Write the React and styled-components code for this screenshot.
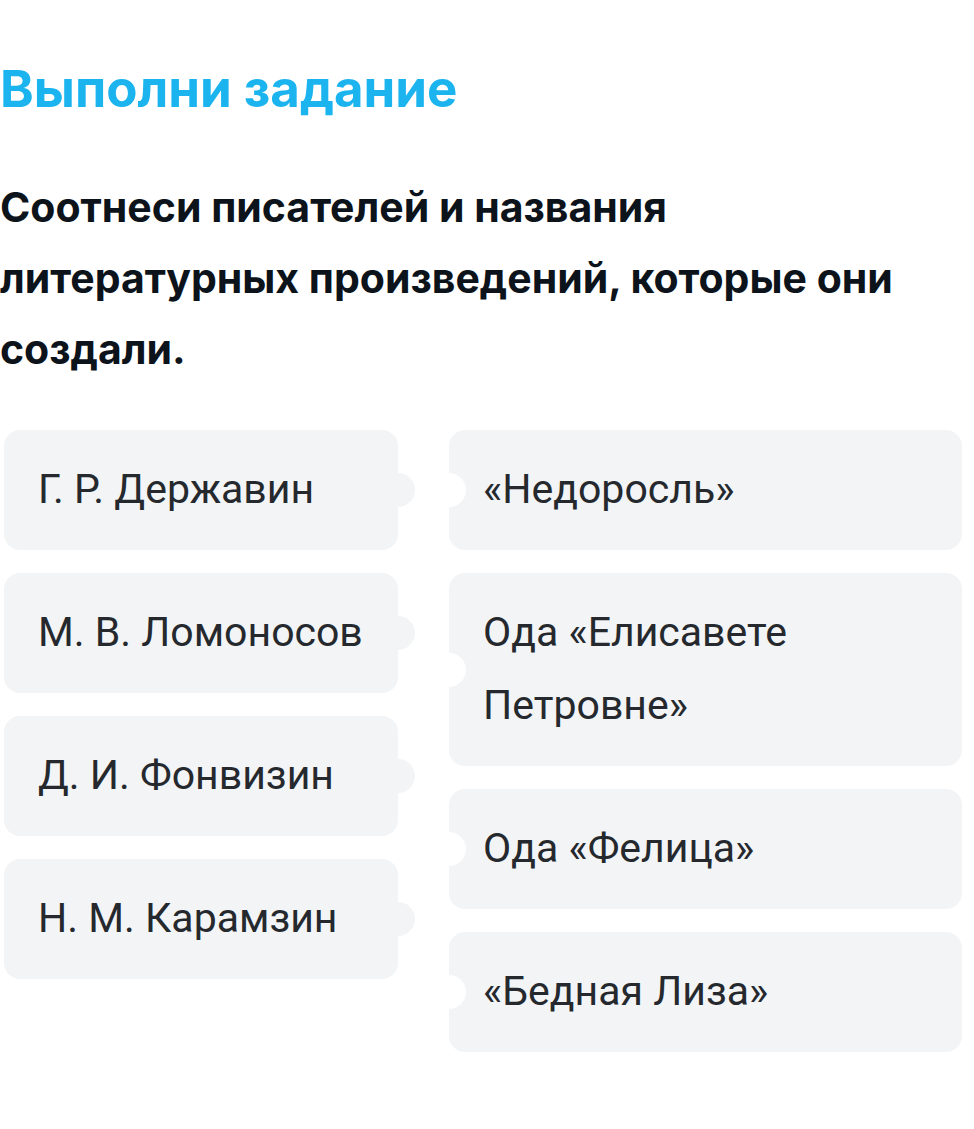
import styled, { createGlobalStyle } from 'styled-components';

const GlobalStyle = createGlobalStyle`
  html, body {
    margin: 0;
    padding: 0;
    background: #ffffff;
  }
`;

const Page = styled.div`
  width: 974px;
  min-height: 1129px;
  overflow: hidden;
  background: #ffffff;
`;

const Heading = styled.h1`
  margin: 58px 0 0 0;
  font-family: Inter, "Noto Sans", sans-serif;
  font-weight: 700;
  font-size: 51px;
  line-height: 61px;
  color: #1bb4ef;
`;

const Question = styled.p`
  margin: 53px 0 0 0;
  width: 930px;
  font-family: Inter, "Noto Sans", sans-serif;
  font-weight: 700;
  font-size: 41px;
  line-height: 71px;
  color: #0c131b;
`;

const Board = styled.div`
  display: flex;
  align-items: flex-start;
  gap: 51px;
  margin: 45px 0 0 4px;
`;

const Column = styled.div`
  display: flex;
  flex-direction: column;
  gap: 23px;
  width: ${(p) => p.$width}px;
`;

const Card = styled.div`
  position: relative;
  padding: 23px 34px 24px;
  background: #f2f4f6;
  border-radius: 16px;
  font-family: Roboto, "Liberation Sans", sans-serif;
  font-size: 41px;
  line-height: 73px;
  color: #25292e;

  &::after {
    content: '';
    position: absolute;
    top: 50%;
    width: 34px;
    height: 34px;
    margin-top: -17px;
    border-radius: 50%;
    background: ${(p) => (p.$side === 'left' ? '#f2f4f6' : '#ffffff')};
    ${(p) => (p.$side === 'left' ? 'right: -17px;' : 'left: -17px;')}
  }
`;

const writers = ['Г. Р. Державин', 'М. В. Ломоносов', 'Д. И. Фонвизин', 'Н. М. Карамзин'];
const works = ['«Недоросль»', 'Ода «Елисавете Петровне»', 'Ода «Фелица»', '«Бедная Лиза»'];

export default function App() {
  return (
    <Page>
      <GlobalStyle />
      <Heading>Выполни задание</Heading>
      <Question>
        Соотнеси писателей и названия литературных произведений, которые они создали.
      </Question>
      <Board>
        <Column $width={394}>
          {writers.map((w) => (
            <Card key={w} $side="left">{w}</Card>
          ))}
        </Column>
        <Column $width={513}>
          {works.map((w) => (
            <Card key={w} $side="right">{w}</Card>
          ))}
        </Column>
      </Board>
    </Page>
  );
}
